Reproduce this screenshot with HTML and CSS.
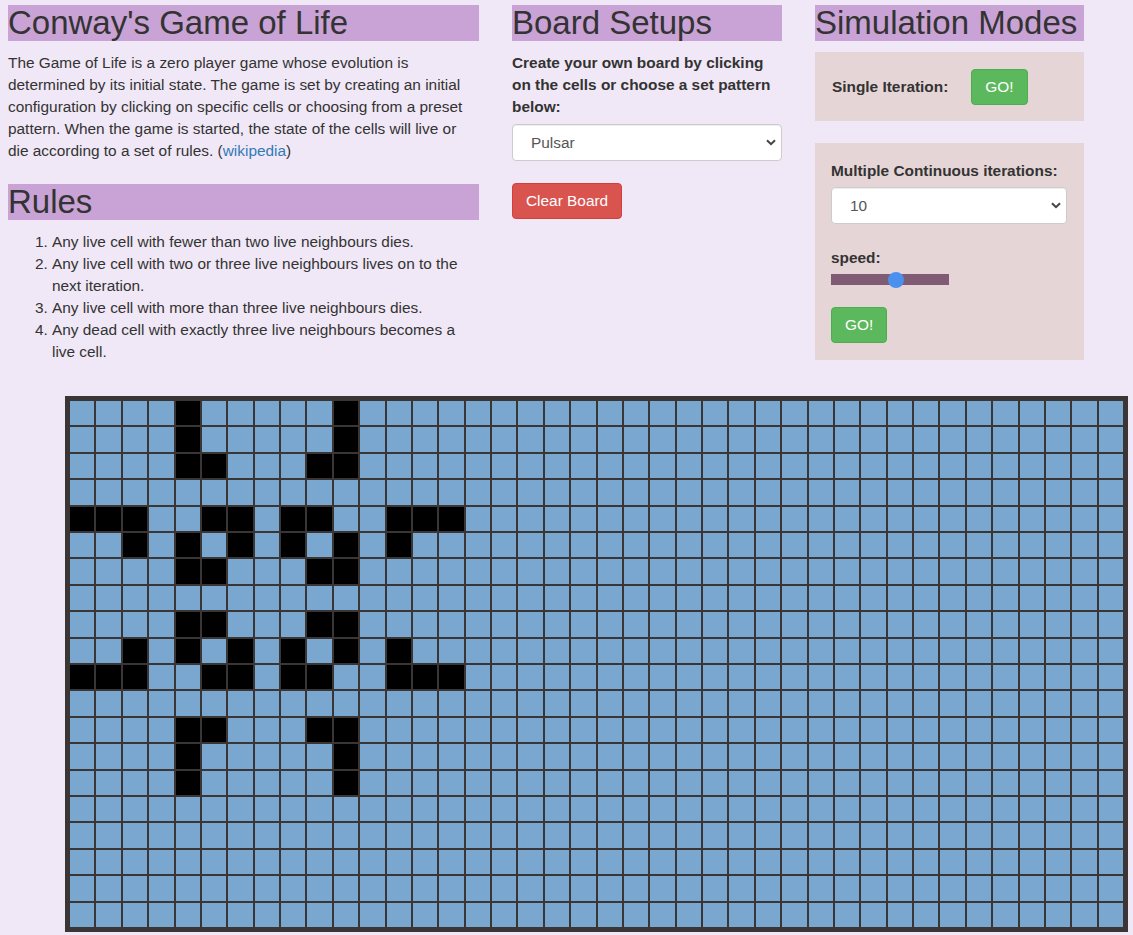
FILE: index.html
```html
<!DOCTYPE html>
<html lang="en">
<head>
<meta charset="utf-8">
<title>Conway's Game of Life</title>
<link rel="stylesheet" href="styles.css">
</head>
<body>
<div class="page">
  <div class="top">
    <section class="col col-about">
      <h2 class="bar">Conway's Game of Life</h2>
      <p class="intro">The Game of Life is a zero player game whose evolution is determined by its initial state. The game is set by creating an initial configuration by clicking on specific cells or choosing from a preset pattern. When the game is started, the state of the cells will live or die according to a set of rules. (<a href="#">wikipedia</a>)</p>
      <h2 class="bar bar-rules">Rules</h2>
      <ol class="rules">
        <li>Any live cell with fewer than two live neighbours dies.</li>
        <li>Any live cell with two or three live neighbours lives on to the next iteration.</li>
        <li>Any live cell with more than three live neighbours dies.</li>
        <li>Any dead cell with exactly three live neighbours becomes a live cell.</li>
      </ol>
    </section>
    <section class="col col-setup">
      <h2 class="bar">Board Setups</h2>
      <label class="lbl block">Create your own board by clicking on the cells or choose a set pattern below:</label>
      <div class="select-wrap">
        <select class="control"><option>Pulsar</option></select>
        <svg class="chev" width="10" height="7" viewBox="0 0 10 7"><path d="M1 1.2 L5 5.2 L9 1.2" fill="none" stroke="#444" stroke-width="2"/></svg>
      </div>
      <button class="btn btn-danger">Clear Board</button>
    </section>
    <section class="col col-sim">
      <h2 class="bar">Simulation Modes</h2>
      <div class="panel panel-single">
        <span class="lbl">Single Iteration:</span>
        <button class="btn btn-success">GO!</button>
      </div>
      <div class="panel panel-multi">
        <label class="lbl block">Multiple Continuous iterations:</label>
        <div class="select-wrap">
          <select class="control"><option>10</option></select>
          <svg class="chev" width="10" height="7" viewBox="0 0 10 7"><path d="M1 1.2 L5 5.2 L9 1.2" fill="none" stroke="#444" stroke-width="2"/></svg>
        </div>
        <label class="lbl block speed-lbl">speed:</label>
        <input class="speed" type="range" min="0" max="100" value="56">
        <div class="go-row"><button class="btn btn-success">GO!</button></div>
      </div>
    </section>
  </div>
  <div class="board" id="board"></div>
</div>
<script src="script.js"></script>
</body>
</html>
```

FILE: styles.css
```css
html, body {
  margin: 0;
  padding: 0;
}
body {
  background: #f0e8f6;
  color: #333;
  font-family: "Liberation Sans", Arial, Helvetica, sans-serif;
  font-size: 15.4px;
  line-height: 22px;
}
.page {
  padding: 5px 0 0 8px;
}
.top {
  display: flex;
  align-items: flex-start;
}
.col-about { width: 471px; }
.col-setup { width: 270px; margin-left: 33px; }
.col-sim { width: 269px; margin-left: 33px; }

.bar {
  margin: 0 0 11px;
  background: #c9a3d6;
  font-size: 33px;
  line-height: 36px;
  font-weight: 400;
  color: #333;
}
.bar-rules {
  margin-top: 22px;
}
.intro {
  margin: 0 0 11px;
}
.intro a {
  color: #337ab7;
  text-decoration: none;
}
.rules {
  margin: 0 0 11px;
  padding-left: 44px;
}
.lbl {
  font-weight: 700;
}
.block {
  display: block;
  margin-bottom: 6px;
}
.select-wrap {
  position: relative;
}
.control {
  display: block;
  width: 100%;
  height: 37px;
  box-sizing: border-box;
  border: 1px solid #ccc;
  border-radius: 4px;
  background: #fff;
  color: #555;
  font-family: inherit;
  font-size: 15.4px;
  padding: 0 18px;
  appearance: none;
  -webkit-appearance: none;
  box-shadow: inset 0 1px 1px rgba(0,0,0,.075);
}
.chev {
  position: absolute;
  right: 6px;
  top: 15px;
  pointer-events: none;
}
.btn {
  display: inline-block;
  font-family: inherit;
  font-size: 15.4px;
  line-height: 22px;
  padding: 6px 13px;
  border: 1px solid transparent;
  border-radius: 4px;
  color: #fff;
  cursor: pointer;
}
.btn-danger {
  background: #d9534f;
  border-color: #d43f3a;
}
.btn-success {
  background: #5cb85c;
  border-color: #4cae4c;
}
.col-setup .btn-danger {
  margin-top: 22px;
}
.panel {
  background: #e6d5d6;
}
.panel-single {
  display: flex;
  align-items: center;
  padding: 17px 17px 16px;
  gap: 23px;
}
.panel-multi {
  margin-top: 22px;
  padding: 17px 17px 17px 16px;
}
.panel-multi .block { margin-bottom: 5px; }
.speed-lbl {
  margin-top: 23px;
}
.speed {
  display: block;
  -webkit-appearance: none;
  appearance: none;
  width: 118px;
  height: 11px;
  margin: 0;
  background: #7f5c73;
  outline: none;
}
.speed::-webkit-slider-thumb {
  -webkit-appearance: none;
  appearance: none;
  width: 16px;
  height: 16px;
  border-radius: 50%;
  background: #4a90ee;
  border: 0;
}
.go-row {
  margin-top: 22px;
}
.board {
  margin: 22px 0 0 57px;
  width: 1063px;
  height: 536px;
  box-sizing: border-box;
  padding: 5px;
  background: #3a3636;
  display: grid;
  grid-template-columns: repeat(40, 1fr);
  grid-template-rows: repeat(20, 1fr);
  gap: 2px;
}
.cell {
  background: #79a7d0;
}
.cell.on {
  background: #000;
}
```

FILE: script.js
```js
(function () {
  var board = document.getElementById('board');
  var live = {
    0: [4, 10], 1: [4, 10], 2: [4, 5, 9, 10],
    4: [0, 1, 2, 5, 6, 8, 9, 12, 13, 14],
    5: [2, 4, 6, 8, 10, 12],
    6: [4, 5, 9, 10],
    8: [4, 5, 9, 10],
    9: [2, 4, 6, 8, 10, 12],
    10: [0, 1, 2, 5, 6, 8, 9, 12, 13, 14],
    12: [4, 5, 9, 10], 13: [4, 10], 14: [4, 10]
  };
  for (var r = 0; r < 20; r++) {
    for (var c = 0; c < 40; c++) {
      var d = document.createElement('div');
      d.className = 'cell';
      if (live[r] && live[r].indexOf(c) !== -1) d.className += ' on';
      board.appendChild(d);
    }
  }
})();
```
